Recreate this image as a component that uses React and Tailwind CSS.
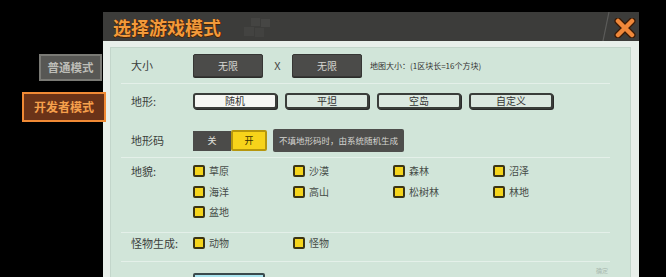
import React from "react";

const F = "font-['Noto_Sans_CJK_SC','Noto_Sans',sans-serif]";

function Check({ label }) {
  return (
    <div className="flex items-center h-[20.5px] w-[100px]">
      <span className="w-[12px] h-[12px] bg-[#f5d51c] border-2 border-[#3b3514] rounded-[2px] flex-none" />
      <span className="ml-[4px] text-[10px] leading-none text-[#454b47]">{label}</span>
    </div>
  );
}

function Sep() {
  return <div className="h-[1px] bg-[#e4f0e9] ml-[10px] mr-[20px] flex-none" />;
}

function TerrainBtn({ label, active }) {
  return (
    <div
      className={
        "w-[84px] h-[16px] flex items-center justify-center border-2 border-[#3a3d3a] rounded-[3px] shadow-[1px_1px_0_#2a2a2a] text-[10px] leading-none text-[#333] " +
        (active ? "bg-[#f6f7f4]" : "bg-[#dbe8e0]")
      }
    >
      {label}
    </div>
  );
}

function DarkBtn({ label }) {
  return (
    <div className="w-[70px] h-[23px] flex items-center justify-center bg-[#4b4b49] border border-[#363634] rounded-[2px] shadow-[0_1px_0_#2c2c2a] text-[10px] leading-none text-[#d6d6d2]">
      {label}
    </div>
  );
}

export default function App() {
  return (
    <div className={"w-[666px] h-[277px] bg-black overflow-hidden flex " + F}>
      {/* left mode buttons */}
      <div className="w-[103px] flex-none flex flex-col">
        <div className="mt-[54px] ml-[39px] w-[63px] h-[27px] bg-[#575754] border-2 border-[#7a7a75] flex items-center justify-center text-[11.5px] font-bold leading-none text-[#bdbdb7]">
          普通模式
        </div>
        <div className="relative z-10 mt-[11px] ml-[22px] w-[84px] h-[30px] bg-[#6a3318] border-2 border-[#f08a35] flex items-center justify-center text-[12px] font-bold leading-none text-[#f6a04c]">
          开发者模式
        </div>
      </div>

      {/* dialog */}
      <div className="mt-[12px] w-[536px] flex-none flex flex-col">
        <div className="relative h-[29px] bg-[#3c3c3a] flex items-center pl-[10px] flex-none">
          <span className="text-[18px] font-bold leading-none text-[#f29a3c] [text-shadow:0_1px_0_#4a2200,1px_0_0_#4a2200]">
            选择游戏模式
          </span>
          <svg className="ml-[18px]" width="34" height="26" viewBox="0 0 34 26">
            <rect x="12" y="4" width="9" height="8" fill="#444442" />
            <rect x="22" y="5" width="9" height="8" fill="#464644" />
            <rect x="5" y="13" width="10" height="9" fill="#434341" />
            <rect x="16" y="14" width="9" height="9" fill="#424240" />
          </svg>
          <svg className="absolute left-[496px] top-0" width="12" height="29" viewBox="0 0 12 29">
            <line x1="10" y1="0" x2="4" y2="29" stroke="#5c5c5a" strokeWidth="1.2" />
          </svg>
          <svg className="absolute left-[511px] top-[6px]" width="22" height="20" viewBox="0 0 22 20">
            <path d="M4 3 L18 17 M18 3 L4 17" stroke="#3a1a05" strokeWidth="7" strokeLinecap="round" />
            <path d="M4 3 L18 17 M18 3 L4 17" stroke="#f0883a" strokeWidth="4.5" strokeLinecap="round" />
          </svg>
        </div>

        <div className="bg-[#e8efea] pt-[6px] pl-[7px] pr-[8px] h-[240px] flex-none">
          <div className="h-full bg-[#d1e5d9] border border-[#c3d6cb] flex flex-col text-[#3b3f3c]">
            {/* 大小 */}
            <div className="h-[35px] flex items-center flex-none">
              <div className="w-[82px] pl-[20px] text-[11px] leading-none flex-none">大小</div>
              <DarkBtn label="无限" />
              <div className="w-[29px] text-center text-[11px] leading-none text-[#4a4a48]">X</div>
              <DarkBtn label="无限" />
              <div className="ml-[8px] text-[8px] leading-none text-[#333]">地图大小：(1区块长=16个方块)</div>
            </div>
            <Sep />
            {/* 地形 */}
            <div className="h-[34px] flex items-center flex-none">
              <div className="w-[82px] pl-[20px] text-[11px] leading-none flex-none">地形:</div>
              <div className="flex gap-[8px]">
                <TerrainBtn label="随机" active />
                <TerrainBtn label="平坦" />
                <TerrainBtn label="空岛" />
                <TerrainBtn label="自定义" />
              </div>
            </div>
            {/* 地形码 */}
            <div className="mt-[6px] h-[33px] flex items-center flex-none">
              <div className="w-[82px] pl-[20px] text-[11px] leading-none flex-none">地形码</div>
              <div className="flex items-center">
                <div className="w-[38px] h-[20px] bg-[#4b4b49] flex items-center justify-center text-[9px] leading-none text-[#e0e0dc]">关</div>
                <div className="w-[36px] h-[21px] bg-[#f7d31a] border-2 border-[#b6970d] rounded-[2px] flex items-center justify-center text-[9px] leading-none text-[#3a3000]">开</div>
              </div>
              <div className="ml-[6px] w-[131px] h-[23px] bg-[#4e4e4c] rounded-[2px] flex items-center pl-[6px] text-[8.5px] leading-none text-[#d4d4d0] whitespace-nowrap">
                不填地形码时，由系统随机生成
              </div>
            </div>
            <Sep />
            {/* 地貌 */}
            <div className="h-[74px] flex items-start pt-[3px] flex-none">
              <div className="w-[82px] pl-[20px] h-[20.5px] flex items-center text-[11px] leading-none flex-none">地貌:</div>
              <div className="grid grid-cols-4">
                <Check label="草原" />
                <Check label="沙漠" />
                <Check label="森林" />
                <Check label="沼泽" />
                <Check label="海洋" />
                <Check label="高山" />
                <Check label="松树林" />
                <Check label="林地" />
                <Check label="盆地" />
              </div>
            </div>
            <Sep />
            {/* 怪物生成 */}
            <div className="h-[28px] flex items-start flex-none">
              <div className="w-[82px] pl-[20px] h-[20.5px] flex items-center text-[11px] leading-none flex-none">怪物生成:</div>
              <div className="flex">
                <Check label="动物" />
                <Check label="怪物" />
              </div>
            </div>
            <Sep />
            <div className="pt-[11px] flex items-start flex-none">
              <div className="w-[82px] flex-none" />
              <div className="w-[72px] h-[20px] bg-[#a8e3ee] border-2 border-[#3a4a4c] rounded-[2px]" />
              <div className="ml-auto mr-[22px] -mt-[5px] text-[6px] leading-none text-[#aab9b0]">确定</div>
            </div>
          </div>
        </div>
      </div>
    </div>
  );
}
